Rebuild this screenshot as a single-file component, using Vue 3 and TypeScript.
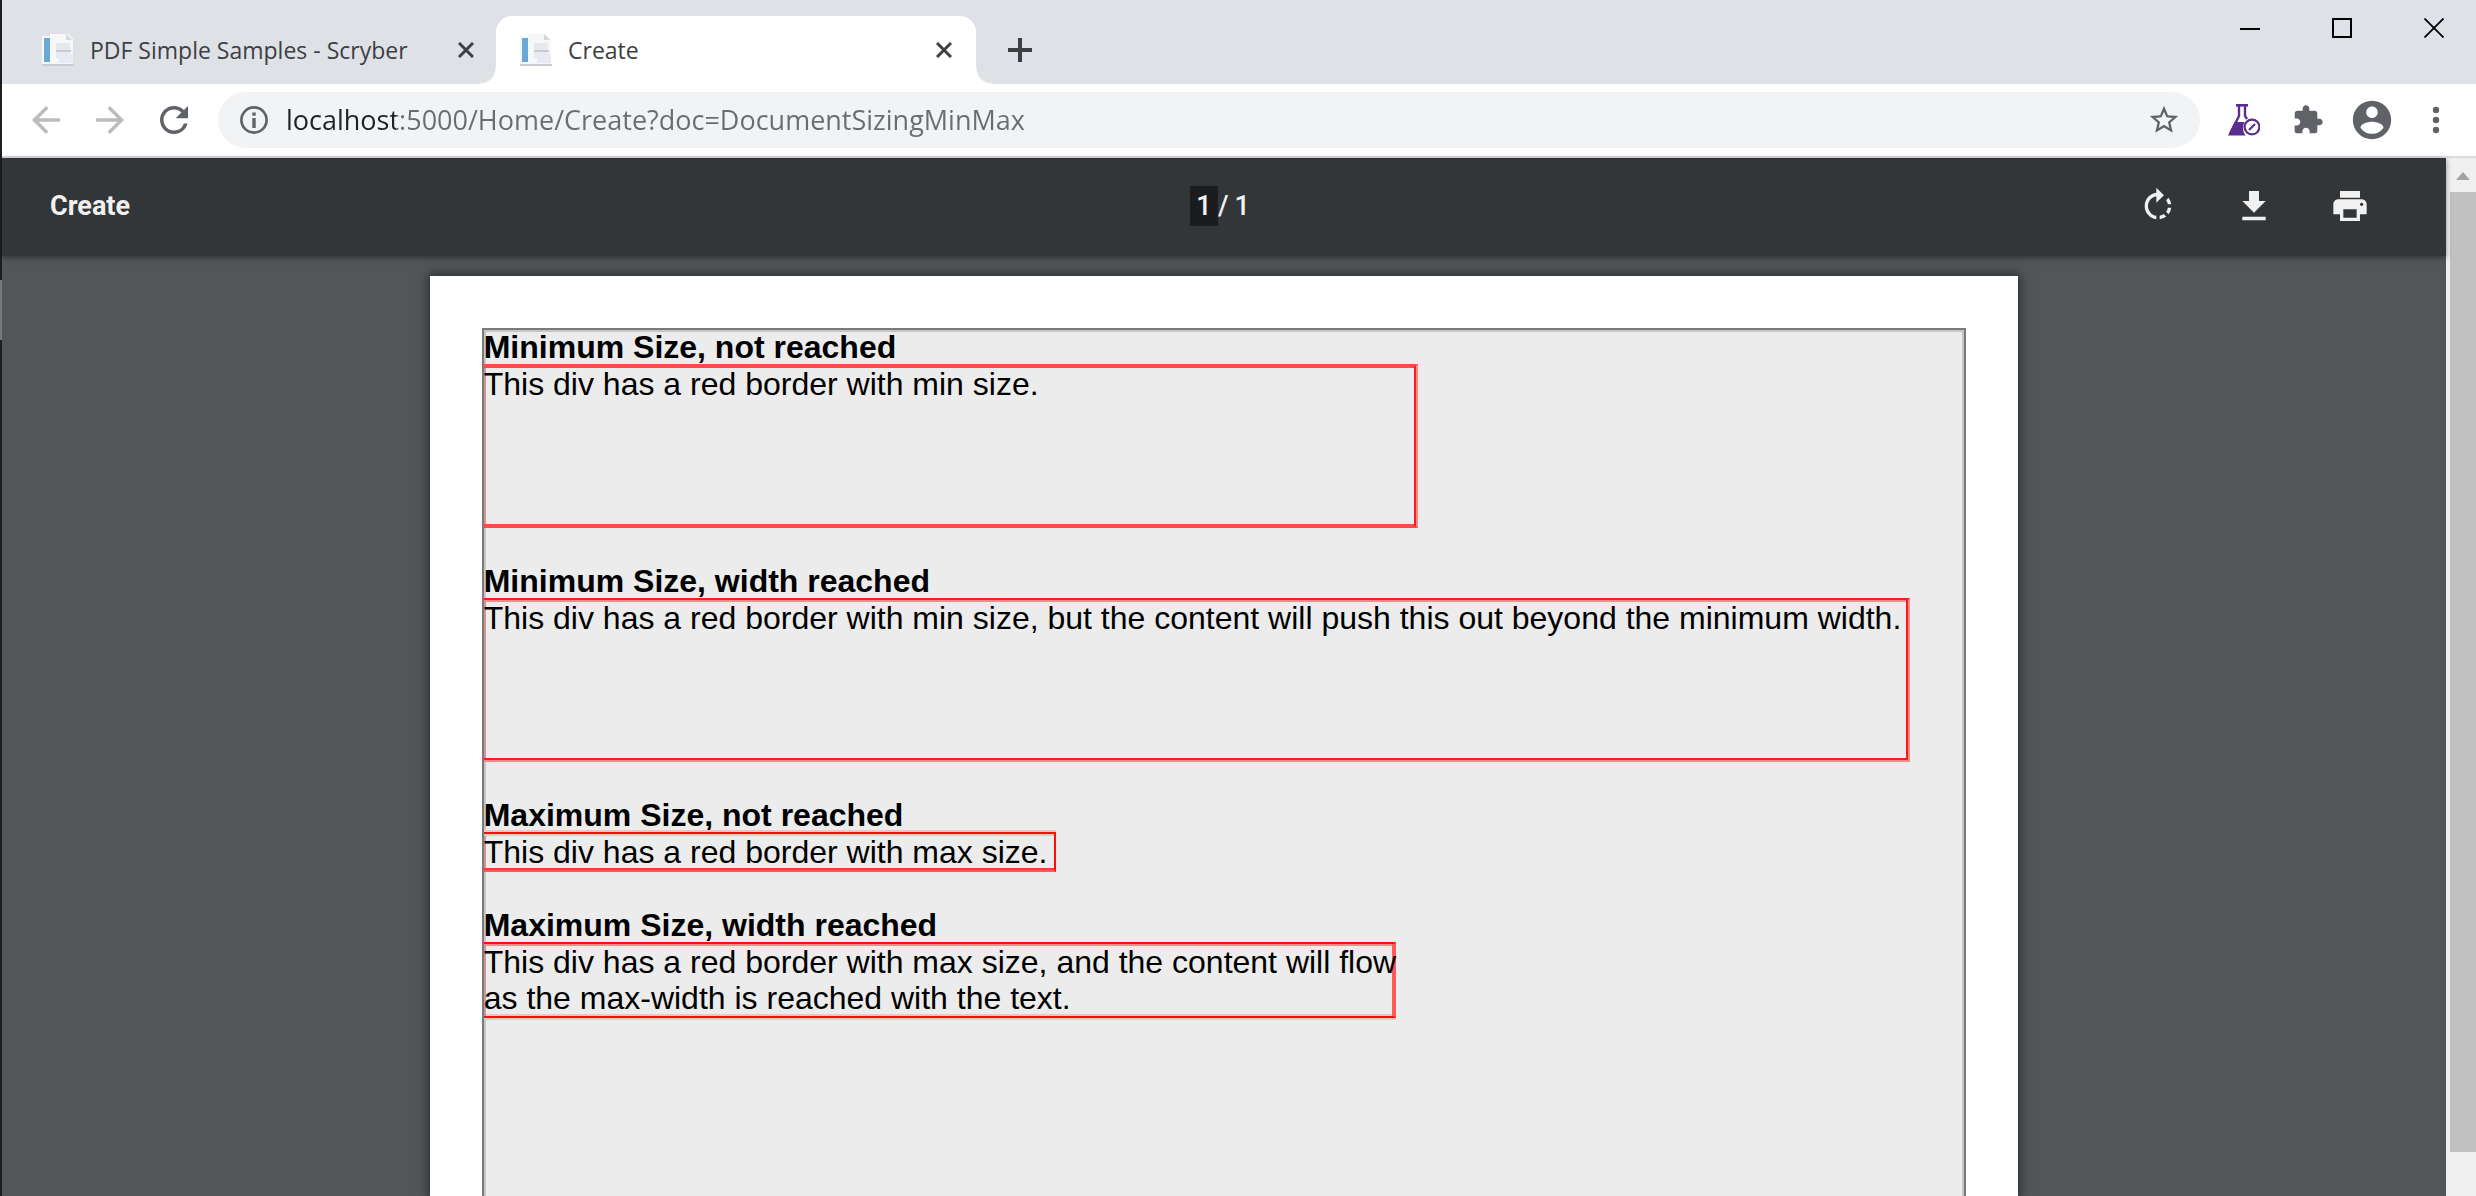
<script setup lang="ts">
import { ref } from 'vue'

interface Sample {
  title: string
  text: string
  kind: string
}

const tabs = [
  { title: 'PDF Simple Samples - Scryber', active: false },
  { title: 'Create', active: true },
]

const address = ref('localhost:5000/Home/Create?doc=DocumentSizingMinMax')
const pageNumber = ref('1')

const samples: Sample[] = [
  {
    title: 'Minimum Size, not reached',
    text: 'This div has a red border with min size.',
    kind: 'min',
  },
  {
    title: 'Minimum Size, width reached',
    text: 'This div has a red border with min size, but the content will push this out beyond the minimum width.',
    kind: 'min-wide',
  },
  {
    title: 'Maximum Size, not reached',
    text: 'This div has a red border with max size.',
    kind: 'max',
  },
  {
    title: 'Maximum Size, width reached',
    text: 'This div has a red border with max size, and the content will flow\nas the max-width is reached with the text.',
    kind: 'max-wide',
  },
]
</script>

<template>
  <div class="screen">
    <div class="edge"></div>
    <div class="browser">
      <header class="tabstrip">
        <div v-for="tab in tabs" :key="tab.title" class="tab" :class="{ active: tab.active }">
          <svg class="favicon" viewBox="0 0 32 32" aria-hidden="true">
            <path d="M0 2H8V0H26L31 5V32H0Z" fill="#f6f7f8" />
            <path d="M0 30H32V32H0Z" fill="#c9ccd1" />
            <path d="M2 4H8V28H2Z" fill="#67aad8" />
            <path d="M24 0L30 6H24Z" fill="#d6d8dc" />
            <path d="M14 9H28V24H14Z" fill="#e6e9ed" />
            <path d="M14 17H29" fill="none" stroke="#c8ccd1" stroke-width="2" />
            <path d="M17 20H31V29H17Z" fill="#e8ebf5" />
          </svg>
          <span class="tab-title">{{ tab.title }}</span>
          <button class="plain tab-close" aria-label="Close tab">
            <svg width="16" height="16" viewBox="0 0 16 16">
              <path d="M1 1L15 15M15 1L1 15" stroke="#3c4043" stroke-width="3" />
            </svg>
          </button>
        </div>
        <button class="plain new-tab" aria-label="New tab">
          <svg width="24" height="24" viewBox="0 0 24 24">
            <path d="M12 0V24M0 12H24" stroke="#3c4043" stroke-width="4" />
          </svg>
        </button>
        <div class="window-controls">
          <button class="plain" aria-label="Minimize">
            <svg width="20" height="20" viewBox="0 0 20 20"><path d="M0 11H20" stroke="#000" stroke-width="2" /></svg>
          </button>
          <button class="plain" aria-label="Maximize">
            <svg width="20" height="20" viewBox="0 0 20 20">
              <rect x="1" y="1" width="18" height="18" fill="none" stroke="#000" stroke-width="2" />
            </svg>
          </button>
          <button class="plain" aria-label="Close">
            <svg width="20" height="20" viewBox="0 0 20 20">
              <path d="M0.5 0.5L19.5 19.5M19.5 0.5L0.5 19.5" stroke="#000" stroke-width="1.8" />
            </svg>
          </button>
        </div>
      </header>

      <nav class="navbar">
        <button class="plain nav-button faded" aria-label="Back">
          <svg width="42" height="42" viewBox="0 0 24 24"><path d="M20 11H7.83l5.59-5.59L12 4l-8 8 8 8 1.41-1.41L7.83 13H20z" /></svg>
        </button>
        <button class="plain nav-button faded" aria-label="Forward">
          <svg width="42" height="42" viewBox="0 0 24 24"><path d="M4 11h12.17l-5.59-5.59L12 4l8 8-8 8-1.41-1.41L16.17 13H4z" /></svg>
        </button>
        <button class="plain nav-button" aria-label="Reload">
          <svg width="42" height="42" viewBox="0 0 24 24"><path d="M17.65 6.35A7.958 7.958 0 0 0 12 4c-4.42 0-7.99 3.58-7.99 8s3.57 8 7.99 8c3.73 0 6.84-2.55 7.73-6h-2.08A5.99 5.99 0 0 1 12 18c-3.31 0-6-2.69-6-6s2.69-6 6-6c1.66 0 3.14.69 4.22 1.78L13 11h7V4z" /></svg>
        </button>
        <div class="omnibox">
          <svg class="info" width="28" height="28" viewBox="0 0 28 28" aria-hidden="true">
            <circle cx="14" cy="14" r="12.6" fill="none" stroke="#5f6368" stroke-width="2.7" />
            <path d="M12.3 6.5H15.7V9.8H12.3ZM12.3 12H15.7V22H12.3Z" />
          </svg>
          <input v-model="address" class="address" type="text" aria-label="Address" spellcheck="false" />
          <button class="plain" aria-label="Bookmark this page">
            <svg width="34" height="34" viewBox="0 0 24 24">
              <path d="M22 9.24l-7.19-.62L12 2 9.19 8.63 2 9.24l5.46 4.73L5.82 21 12 17.27 18.18 21l-1.63-7.03L22 9.24zM12 15.4l-3.76 2.27 1-4.28-3.32-2.88 4.38-.38L12 6.1l1.71 4.04 4.38.38-3.32 2.88 1 4.28L12 15.4z" />
            </svg>
          </button>
        </div>
        <button class="plain nav-button" aria-label="Lab extension">
          <svg width="32" height="32" viewBox="0 0 32 32">
            <g fill="none" stroke="#5c2d91">
              <path d="M8 1.3H20" stroke-width="2.6" />
              <path d="M11 2V12L2 30M17 2V12L19 15" stroke-width="2.4" />
              <circle cx="24" cy="23" r="7.4" stroke-width="2.2" />
              <path d="M21 26L27 20" stroke-width="2.2" />
            </g>
            <path d="M6.5 18H16.5C14.6 21.5 14.4 27 17.5 31.5H0Z" fill="#5c2d91" />
          </svg>
        </button>
        <button class="plain nav-button" aria-label="Extensions">
          <svg width="32" height="32" viewBox="0 0 24 24"><path d="M20.5 11H19V7c0-1.1-.9-2-2-2h-4V3.5C13 2.12 11.88 1 10.5 1S8 2.12 8 3.5V5H4c-1.1 0-1.99.9-1.99 2v3.8H3.5c1.49 0 2.7 1.21 2.7 2.7s-1.21 2.7-2.7 2.7H2V20c0 1.1.9 2 2 2h3.8v-1.5c0-1.49 1.21-2.7 2.7-2.7 1.49 0 2.7 1.21 2.7 2.7V22H17c1.1 0 2-.9 2-2v-4h1.5c1.38 0 2.5-1.12 2.5-2.5S21.88 11 20.5 11z" /></svg>
        </button>
        <button class="plain nav-button" aria-label="Profile">
          <svg width="46" height="46" viewBox="0 0 24 24"><path d="M12 2C6.48 2 2 6.48 2 12s4.48 10 10 10 10-4.48 10-10S17.52 2 12 2zm0 3c1.66 0 3 1.34 3 3s-1.34 3-3 3-3-1.34-3-3 1.34-3 3-3zm0 14.2c-2.5 0-4.71-1.28-6-3.22.03-1.99 4-3.08 6-3.08 1.99 0 5.97 1.09 6 3.08-1.29 1.94-3.5 3.22-6 3.22z" /></svg>
        </button>
        <button class="plain nav-button" aria-label="Menu">
          <svg width="8" height="28" viewBox="0 0 8 28">
            <circle cx="4" cy="4" r="3.2" /><circle cx="4" cy="14" r="3.2" /><circle cx="4" cy="24" r="3.2" />
          </svg>
        </button>
      </nav>

      <div class="content">
        <main class="viewer">
          <div class="pdf-toolbar">
            <h1 class="pdf-title">Create</h1>
            <div class="pages">
              <input v-model="pageNumber" class="page-number" type="text" aria-label="Page number" />
              <span>/</span>
              <span class="page-count">1</span>
            </div>
            <div class="actions">
              <button class="plain" aria-label="Rotate clockwise">
                <svg width="40" height="40" viewBox="0 0 24 24"><path d="M15.55 5.55L11 1v3.07C7.06 4.56 4 7.92 4 12s3.05 7.44 7 7.93v-2.02c-2.84-.48-5-2.94-5-5.91s2.16-5.43 5-5.91V10l4.55-4.45zM19.93 11a7.906 7.906 0 0 0-1.62-3.89l-1.42 1.42c.54.75.88 1.6 1.02 2.47h2.02zM13 17.9v2.02c1.39-.17 2.74-.71 3.9-1.61l-1.44-1.44c-.75.54-1.59.89-2.46 1.03zm3.89-2.42l1.42 1.41c.9-1.16 1.45-2.5 1.62-3.89h-2.02c-.14.87-.48 1.72-1.02 2.48z" /></svg>
              </button>
              <button class="plain" aria-label="Download">
                <svg width="40" height="40" viewBox="0 0 24 24"><path d="M19 9h-4V3H9v6H5l7 7 7-7zM5 18.5v2h14v-2H5z" /></svg>
              </button>
              <button class="plain" aria-label="Print">
                <svg width="40" height="40" viewBox="0 0 24 24"><path d="M19 8H5c-1.66 0-3 1.34-3 3v6h4v4h12v-4h4v-6c0-1.66-1.34-3-3-3zm-3 11H8v-5h8v5zm3-7c-.55 0-1-.45-1-1s.45-1 1-1 1 .45 1 1-.45 1-1 1zm-1-9H6v4h12V3z" /></svg>
              </button>
            </div>
          </div>
          <article class="sheet">
            <div class="body-box">
              <section v-for="sample in samples" :key="sample.title" class="sample">
                <h2 class="heading">{{ sample.title }}</h2>
                <p class="frame" :class="sample.kind">{{ sample.text }}</p>
              </section>
            </div>
          </article>
        </main>
        <div class="scrollbar">
          <svg width="14" height="8" viewBox="0 0 14 8" aria-hidden="true"><path d="M7 0L14 8H0Z" fill="#a3a3a3" /></svg>
          <div class="thumb"></div>
        </div>
      </div>
    </div>
  </div>
</template>

<style>
body {
  margin: 0;
  overflow: hidden;
}
</style>

<style scoped>
* {
  box-sizing: border-box;
}

.screen {
  display: flex;
  height: 100vh;
  overflow: hidden;
}

/* sliver of the window lying behind the browser */
.edge {
  flex: none;
  width: 2px;
  background: linear-gradient(#1e1e1e 280px, #777 280px, #777 340px, #1e1e1e 340px);
}

.browser {
  flex: 1;
  min-width: 0;
  display: flex;
  flex-direction: column;
  font-family: 'Open Sans', 'Noto Sans', sans-serif;
}

svg {
  display: block;
  fill: #5f6368;
}

.plain {
  display: flex;
  align-items: center;
  justify-content: center;
  padding: 0;
  border: 0;
  background: none;
}

.tabstrip {
  flex: none;
  display: flex;
  align-items: flex-end;
  height: 84px;
  padding-left: 14px;
  background: #dee1e6;
}

.tab {
  display: flex;
  align-items: center;
  width: 480px;
  height: 68px;
  padding: 0 24px;
  gap: 16px;
  color: #3c4043;
}

.tab:first-child {
  padding: 0 22px 0 26px;
}

.tab.active {
  position: relative;
  border-radius: 16px 16px 0 0;
  background: #fff;
}

.tab.active::before,
.tab.active::after {
  content: '';
  position: absolute;
  bottom: 0;
  width: 16px;
  height: 16px;
}

.tab.active::before {
  right: 100%;
  background: radial-gradient(circle at 0 0, transparent 15px, #fff 16px);
}

.tab.active::after {
  left: 100%;
  background: radial-gradient(circle at 100% 0, transparent 15px, #fff 16px);
}

.favicon {
  flex: none;
  width: 32px;
  height: 32px;
}

.tab-title {
  flex: 1;
  font-size: 23px;
  line-height: 32px;
  white-space: nowrap;
}

.new-tab {
  width: 64px;
  height: 68px;
  margin-left: 12px;
}

.window-controls {
  align-self: flex-start;
  display: flex;
  align-items: center;
  gap: 72px;
  height: 56px;
  margin-left: auto;
  padding-right: 32px;
}

.navbar {
  flex: none;
  display: flex;
  align-items: center;
  height: 74px;
  padding: 0 8px 0 12px;
  border-bottom: 2px solid #dadce0;
  background: #fff;
}

.nav-button {
  flex: none;
  width: 64px;
  height: 56px;
}

.faded svg {
  fill: #babcbe;
}

.omnibox {
  flex: 1;
  display: flex;
  align-items: center;
  height: 56px;
  margin: 0 12px;
  padding: 0 19px 0 22px;
  border-radius: 28px;
  background: #f1f3f4;
}

.address {
  flex: 1;
  min-width: 0;
  height: 40px;
  margin-left: 18px;
  padding: 0;
  border: 0;
  outline: 0;
  background: linear-gradient(90deg, #202124 110px, #696c70 110px);
  background-clip: text;
  color: transparent;
  font: 27px/40px 'Open Sans', 'Noto Sans', sans-serif;
}

.info {
  flex: none;
}

.content {
  flex: 1;
  min-height: 0;
  display: flex;
}

.viewer {
  flex: 1;
  min-width: 0;
  display: flex;
  flex-direction: column;
  background: #525659;
}

.pdf-toolbar {
  position: relative;
  flex: none;
  display: grid;
  grid-template-columns: 1fr 68px 1fr;
  align-items: center;
  height: 98px;
  padding-bottom: 2px;
  background: #323639;
  box-shadow: 0 2px 6px rgba(0, 0, 0, 0.4);
  color: #f1f1f1;
  font: 500 27px/40px Roboto, sans-serif;
}

.pdf-title {
  margin: 0;
  padding-left: 48px;
  font: bold 27px/40px Roboto, sans-serif;
}

.pages {
  display: flex;
}

.page-number {
  width: 28px;
  height: 40px;
  padding: 0;
  border: 0;
  outline: 0;
  background: #1b1c1e;
  color: inherit;
  font: inherit;
  text-align: center;
}

.page-count {
  margin-left: 6px;
}

.actions {
  display: flex;
  justify-content: flex-end;
  gap: 56px;
  padding-right: 76px;
}

.actions svg {
  fill: #f1f1f1;
}

.sheet {
  flex: 1;
  min-height: 0;
  display: flex;
  width: 65%;
  min-width: 1588px;
  margin: 20px auto 0;
  padding: 52px 52px 0;
  background: #fff;
  box-shadow: 0 0 10px 2px rgba(0, 0, 0, 0.5);
}

.body-box {
  flex: 1;
  border: 2px solid #7a7a7a;
  border-bottom: 0;
  background: #ececec;
  box-shadow: inset 0 2px #c6c6c6, inset 2px 0 #c6c6c6, inset -2px 0 #c6c6c6;
  color: #000;
  font-family: 'Liberation Sans', Arial, sans-serif;
}

.sample {
  display: flex;
  flex-direction: column;
  align-items: flex-start;
  margin-bottom: 36px;
}

.heading {
  margin: 0;
  font-size: 32px;
  line-height: 34px;
}

.frame {
  margin: 0;
  border: 2px solid #ff1a1a;
  border-left: 0;
  font-size: 32px;
  line-height: 36px;
  white-space: pre;
}

.min {
  width: 934px;
  min-height: 164px;
  border-color: #ff4a4a;
  border-right-color: #f58a8a;
  box-shadow: inset -2px 0 #ff1a1a, inset 0 2px #ff4a4a, inset 0 -2px #ff4a4a, inset 2px 0 #cf9696;
}

.min-wide {
  width: 1426px;
  min-height: 164px;
  border-right-color: #f58a8a;
  border-bottom-color: #f58a8a;
  box-shadow: inset -2px 0 #ff1a1a, inset 0 -2px #ff1a1a, inset 0 2px #f58a8a, inset 2px 0 #cf9696;
}

.max {
  width: 572px;
  border-color: #ff0d0d;
  border-bottom-color: #ff5a5a;
  box-shadow: inset 0 -2px #ff3a3a, inset 0 2px #f0c4c4, 0 -2px #f0c4c4, inset 2px 0 #cf9696;
}

.max-wide {
  width: 912px;
  border-color: #ff0d0d;
  border-right-color: #ff5a5a;
  box-shadow: inset -2px 0 #ff5a5a, inset 0 2px #f58a8a, inset 2px 0 #cf9696, 0 2px #f0c4c4, inset 0 -2px #f0c4c4;
}

.scrollbar {
  flex: none;
  display: flex;
  flex-direction: column;
  align-items: center;
  width: 30px;
  padding: 14px 0 44px 4px;
  background: #f0f0f0;
}

.thumb {
  flex: 1;
  width: 100%;
  margin-top: 12px;
  background: #c1c1c1;
}
</style>
